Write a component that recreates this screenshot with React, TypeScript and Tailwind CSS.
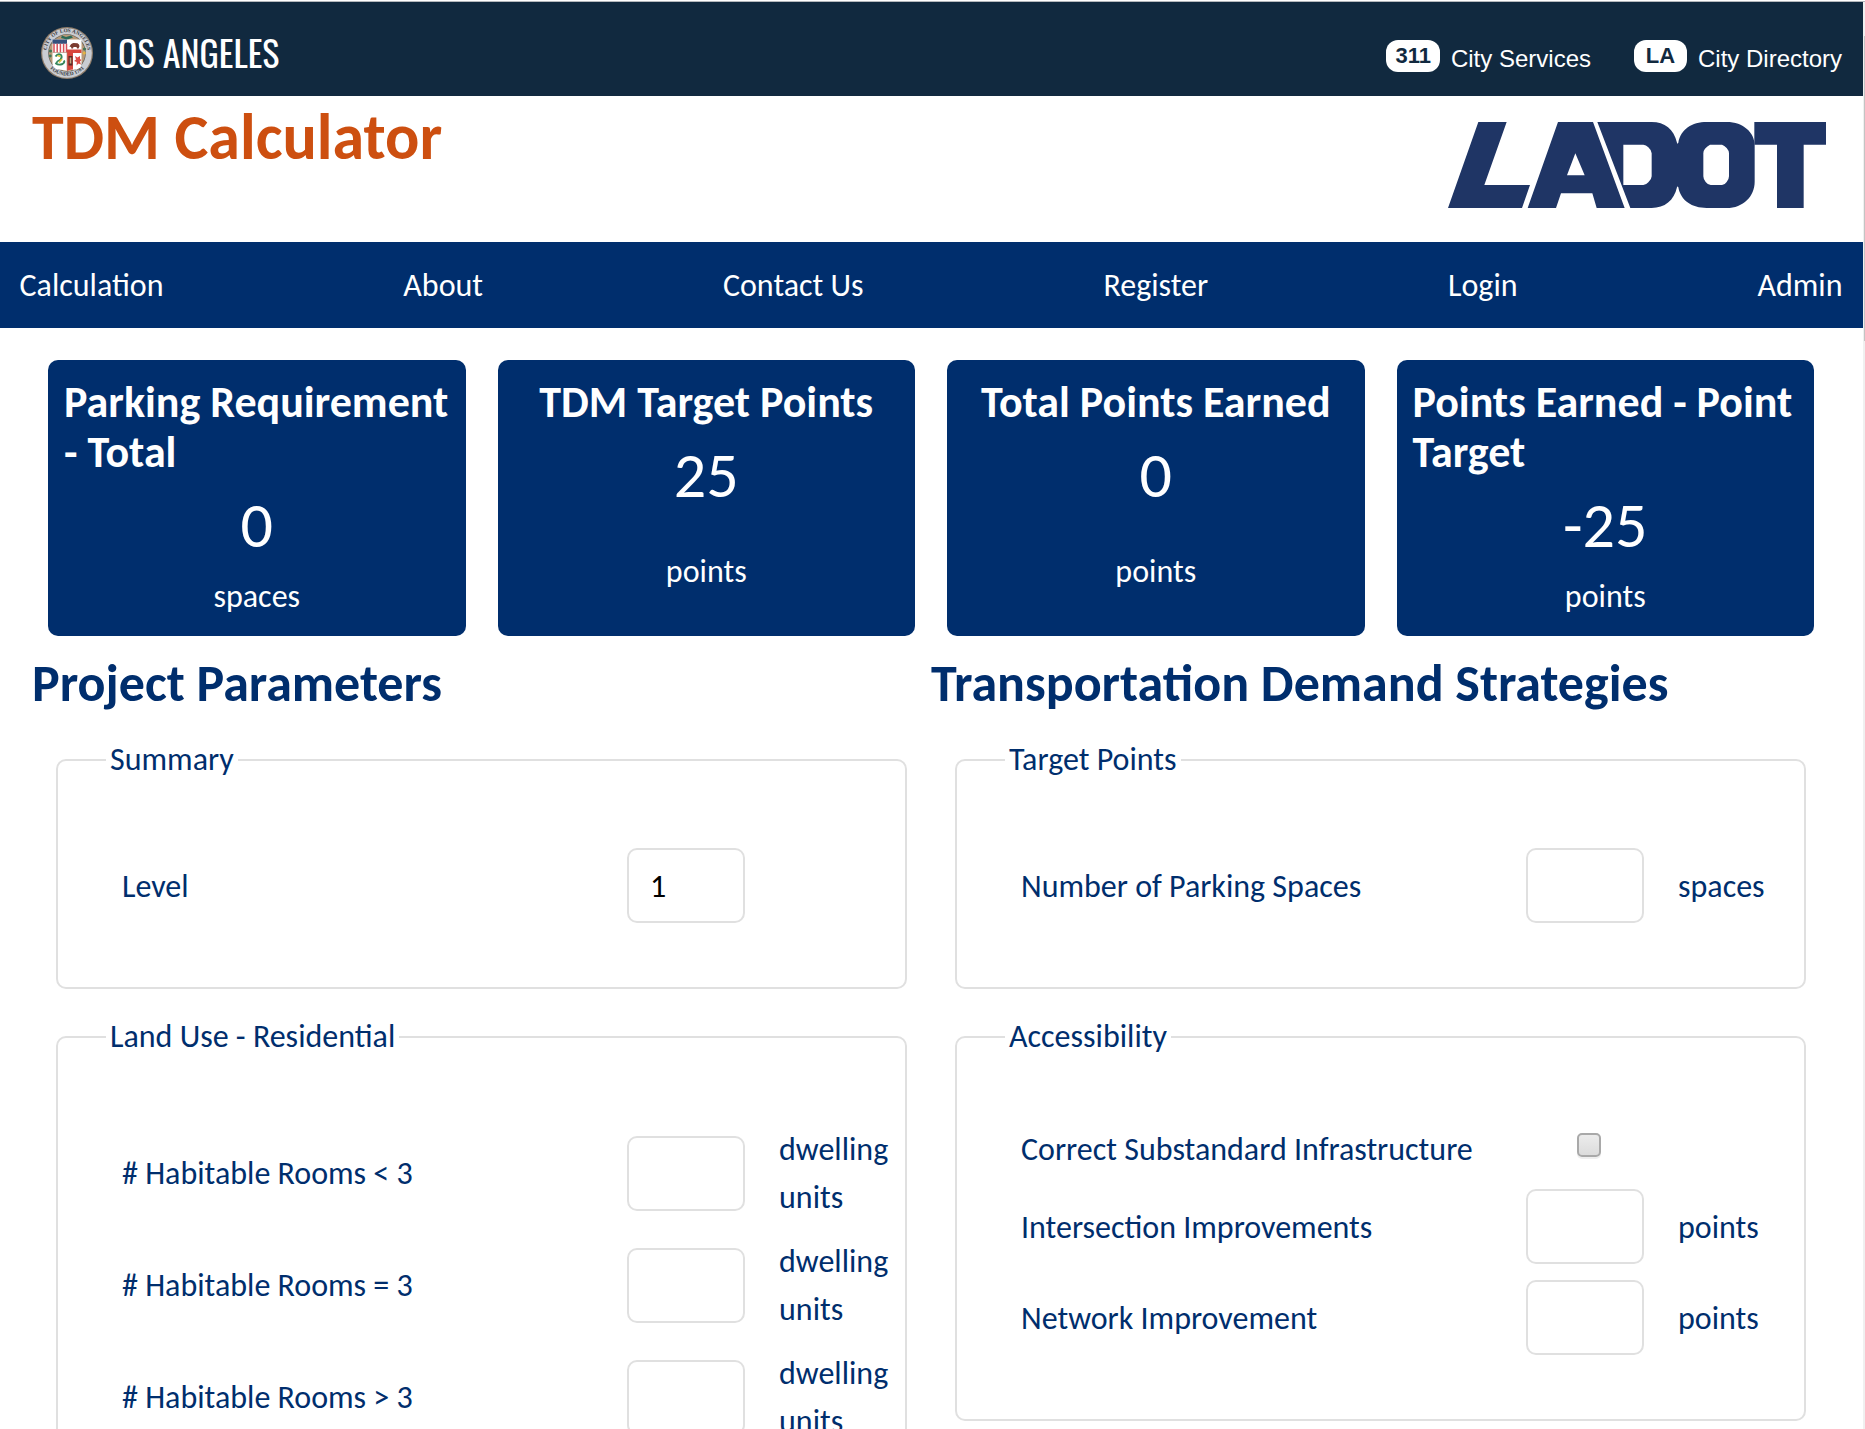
import type { ReactNode } from "react";

const navItems = ["Calculation", "About", "Contact Us", "Register", "Login", "Admin"];

const results = [
  { title: "Parking Requirement - Total", value: "0", unit: "spaces" },
  { title: "TDM Target Points", value: "25", unit: "points" },
  { title: "Total Points Earned", value: "0", unit: "points" },
  { title: "Points Earned - Point Target", value: "-25", unit: "points" },
];

function CitySeal() {
  return (
    <svg viewBox="0 0 52 52" className="h-[52px] w-[52px] shrink-0">
      <defs>
        <path id="rim-top" d="M6 30.500A20.600 20.600 0 1 1 46 30.500" />
        <path id="rim-bottom" d="M4.500 35A23.700 23.700 0 0 0 47.500 35" />
      </defs>
      <circle cx="26" cy="26" r="26" fill="#8f7d6b" />
      <circle cx="26" cy="26" r="24.800" fill="#c9ccd2" />
      <circle cx="26" cy="26" r="18.800" fill="#5d5a50" />
      <circle cx="26" cy="26" r="18.200" fill="#b99a78" />
      <path d="M21 8.500l4 1.500 5-1.500 2 2-4 1.500-2 2-2-2-4-1z" fill="#2c6a58" />
      <circle cx="9.500" cy="24" r="1.600" fill="#3f7355" />
      <circle cx="9.300" cy="29" r="1.400" fill="#3f7355" />
      <circle cx="43.500" cy="22" r="1.600" fill="#3f7355" />
      <circle cx="43.200" cy="26" r="1.600" fill="#e3b344" />
      <path d="M11.500 12.500h29V37q0 5-6 5.500q-6 .5-8.500 1.500q-2.500-1-8.500-1.500q-6-.5-6-5.500z" fill="#fff" />
      <path d="M11.500 12.500H26v4.300H11.500z" fill="#35507c" />
      <path d="M13 16.800v8.700M16.200 16.800v8.700M19.400 16.800v8.700M22.600 16.800v8.700M25.500 16.800v8.700" stroke="#d9505a" strokeWidth="1.500" />
      <path d="M28.500 20q1-3.500 4-4l4 .2q2 .8 2 3l-1 2.300h-1.500l-.5-1.500h-3l-.5 1.500h-1.600l-.4-1.700z" fill="#7b3b30" />
      <path d="M26 22.500h14.500V26H32v16.500q-4 .3-6 1.500z" fill="#d8463c" />
      <path d="M27.500 29h4v9.500h-4z" fill="#5a2b26" />
      <path d="M28.700 30.500h1.600v6h-1.600z" fill="#c9a27c" />
      <path d="M34 29l2.500 1.500 2.500-1.500v3l1.500 1-1.500 1.500 1 3-2.500-1-2 2 .3-3.500-2.800-1 2-1.500z" fill="#dd4c46" />
      <path d="M14.500 29.500q2.500-3.500 5.500-1.500 1.500 2-.5 4.500-3.500 1.500-4.500 4 2.500 2 6.500.5 2.500-1.500 1.500-3.500" fill="none" stroke="#34865c" strokeWidth="1.900" />
      <path d="M16.500 28.500l3 1M21 32l-3 3.500" stroke="#e2c443" strokeWidth="1.700" />
      <path d="M11.500 25.500H26V44" fill="none" stroke="#a88b72" strokeWidth=".6" />
      <text fontFamily="Liberation Serif" fontWeight="700" fontSize="5.200" fill="#33363c">
        <textPath href="#rim-top" startOffset="50%" textAnchor="middle" textLength="60">CITY OF LOS ANGELES</textPath>
      </text>
      <text fontFamily="Liberation Serif" fontWeight="700" fontSize="5.200" fill="#33363c">
        <textPath href="#rim-bottom" startOffset="50%" textAnchor="middle" textLength="38">FOUNDED 1781</textPath>
      </text>
    </svg>
  );
}

function LadotLogo() {
  return (
    <svg viewBox="54 36 1134 258" className="h-[86px] w-[378px]" fill="#1f3565" fillRule="evenodd">
      <path d="M145 36H230L163 225H300L276 294H54Z" />
      <path d="M384 36H489L584 294H500L487 250H393L378 294H293ZM436 130L464 196H411Z" />
      <path d="M502 36H665C704 36 732 58 741 98L743 103V228L741 232C732 272 704 294 665 294H601ZM580 104V225H640Q648 225 655 217Q665 208 665 199V130Q665 121 655 112Q648 104 640 104Z" />
      <path d="M741 103L745 98C752 58 786 36 830 36H890C940 36 974 68 974 106V215C974 258 940 294 890 294H830C786 294 752 272 745 232L741 228ZM840 104Q832 108 825 116Q820 122 820 130V199Q820 208 827 216Q834 225 842 225H876Q884 225 890 216Q897 208 897 199V130Q897 122 890 114Q883 106 876 104Z" />
      <path d="M973 36H1188V104H1121V294H1041V104H973Z" />
    </svg>
  );
}

function ServiceLink({ badge, label }: { badge: string; label: string }) {
  return (
    <a className="flex items-start gap-[11px] text-white">
      <span className="h-8 min-w-[53px] rounded-[12px] bg-white px-[9px] text-center text-[22px] leading-[31px] font-bold text-[#11293f]">
        {badge}
      </span>
      <span className="pt-[4px] text-2xl leading-[30px]">{label}</span>
    </a>
  );
}

function ResultCard({ title, value, unit }: { title: string; value: string; unit: string }) {
  return (
    <div className="flex h-[276px] flex-col items-center rounded-[10px] bg-[#002e6d] px-4 pt-[17px] pb-[17px] text-white">
      <h2 className="text-[44px] leading-[50px] font-bold">{title}</h2>
      <div className="mt-[2px] text-[64px] leading-[92px]">{value}</div>
      <div className="flex flex-1 items-center pt-[3px] text-[32px] leading-[40px]">{unit}</div>
    </div>
  );
}

function Panel({ title, children }: { title: string; children: ReactNode }) {
  return (
    <fieldset className="mb-6 ml-6 w-[851px] rounded-[10px] border-2 border-[#e0e0e0] pb-16">
      <legend className="ml-12 px-1 leading-[48px]">{title}</legend>
      <div className="flex flex-col gap-4 pt-16 pl-16">{children}</div>
    </fieldset>
  );
}

function Field({ label, unit, value, checkbox }: { label: string; unit?: string; value?: string; checkbox?: boolean }) {
  return (
    <div className="flex items-center">
      <label className="-mb-px w-[505px] pt-px leading-[48px]">{label}</label>
      {checkbox ? (
        <input
          type="checkbox"
          className="-mt-[8px] ml-[51px] h-6 w-6 appearance-none rounded-[5px] border-2 border-[#a9a9a9] bg-linear-to-b from-[#ececec] to-[#dcdcdc] shadow-[0_2px_0_#efefef]"
        />
      ) : (
        <input
          defaultValue={value}
          className="h-[75px] w-[118px] rounded-[10px] border-2 border-[#e0e0e0] bg-white pt-px pl-[21px] text-black"
        />
      )}
      {unit && <span className="-mb-px ml-[34px] w-[125px] pt-px leading-[48px]">{unit}</span>}
    </div>
  );
}

export default function App() {
  return (
    <div className="flex h-[1429px] w-[1865px] flex-col overflow-hidden bg-white pt-px font-[Carlito,Calibri,Lato,sans-serif] text-[32px] text-[#002e6d]">
      <div className="h-px shrink-0 bg-[#b5b8bc]" />
      <div className="flex flex-1 overflow-hidden">
        <div className="w-[1863px] shrink-0">
          <header className="flex h-[94px] items-start justify-between bg-[#11293f] pr-[21px] pl-[41px]">
            <div className="flex items-start gap-[11px] pt-[25px]">
              <CitySeal />
              <span className="-mt-px font-[Oswald,'Roboto_Condensed',sans-serif] text-[36px] leading-[52px] text-white">LOS ANGELES</span>
            </div>
            <div className="flex gap-[43px] pt-[38px] font-['Liberation_Sans',sans-serif]">
              <ServiceLink badge="311" label="City Services" />
              <ServiceLink badge="LA" label="City Directory" />
            </div>
          </header>

          <div className="flex h-[146px] items-start justify-between pr-[37px] pl-8">
            <h1 className="pt-[3px] text-[64px] leading-[76px] font-bold text-[#cd4f10]">TDM Calculator</h1>
            <div className="pt-[26px]">
              <LadotLogo />
            </div>
          </div>

          <nav className="flex h-[86px] items-center justify-between bg-[#002e6d] pt-px pr-[20.5px] pl-[19.5px] text-white">
            {navItems.map((item) => (
              <a key={item}>{item}</a>
            ))}
          </nav>

          <section className="grid grid-cols-4 gap-8 pt-8 pr-[49px] pl-12">
            {results.map((r) => (
              <ResultCard key={r.title} {...r} />
            ))}
          </section>

          <main className="grid grid-cols-[899px_900px] pt-4 pl-8">
            <section>
              <h2 className="mb-[22px] text-[52px] leading-[62px] font-bold">Project Parameters</h2>
              <Panel title="Summary">
                <Field label="Level" value="1" />
              </Panel>
              <Panel title="Land Use - Residential">
                <Field label="# Habitable Rooms < 3" unit="dwelling units" />
                <Field label="# Habitable Rooms = 3" unit="dwelling units" />
                <Field label="# Habitable Rooms > 3" unit="dwelling units" />
              </Panel>
            </section>
            <section>
              <h2 className="mb-[22px] text-[52px] leading-[62px] font-bold">Transportation Demand Strategies</h2>
              <Panel title="Target Points">
                <Field label="Number of Parking Spaces" unit="spaces" />
              </Panel>
              <Panel title="Accessibility">
                <Field label="Correct Substandard Infrastructure" checkbox />
                <Field label="Intersection Improvements" unit="points" />
                <Field label="Network Improvement" unit="points" />
              </Panel>
            </section>
          </main>
        </div>
        <div className="flex w-[2px] flex-col items-end bg-[#f0f0f0] pt-[34px]">
          <div className="h-[305px] w-px bg-[#c4c4c4]" />
        </div>
      </div>
    </div>
  );
}
